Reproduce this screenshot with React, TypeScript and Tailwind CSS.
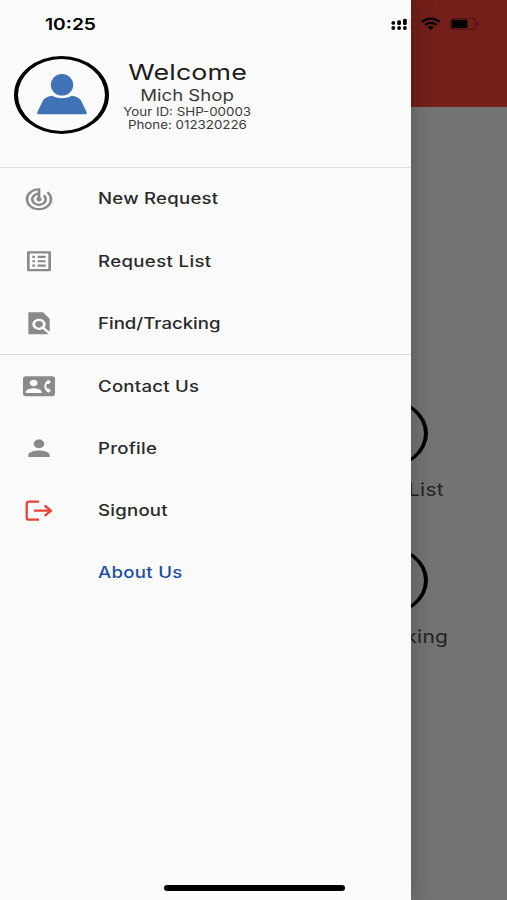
import type { ReactNode } from "react";
import { MdContactPhone, MdListAlt, MdPerson, MdTrackChanges } from "react-icons/md";

const iconClass = "w-8 h-[26.5px] text-[#8a8a8a]";

const FindIcon = () => (
  <svg viewBox="0 0 24 24" preserveAspectRatio="none" fill="currentColor" className={iconClass}>
    <path d="M20 19.590V8l-5-6H4v20h15.200l-4.440-4.830c-.8.52-1.740.83-2.760.83-2.760 0-5-2.240-5-5s2.240-5 5-5 5 2.240 5 5c0 1.020-.31 1.960-.83 2.750L20 19.590zM9 13c0 1.660 1.340 3 3 3s3-1.340 3-3-1.340-3-3-3-3 1.340-3 3z" />
  </svg>
);

const LogoutIcon = () => (
  <svg viewBox="0 0 28 22" className="w-7 h-[22px] -translate-x-[0.5px] -translate-y-[0.5px]" fill="none" stroke="#f04036" strokeWidth="2.3">
    <path d="M14.500 2.200H4.200a2 2 0 0 0-2 2v14a2 2 0 0 0 2 2h10.300" />
    <path d="M9.500 11.200h17M20.200 6l6.200 5.200-6.200 5.200" />
  </svg>
);

type MenuItemProps = {
  icon?: ReactNode;
  label: string;
  className?: string;
};

const MenuItem = ({ icon, label, className = "tracking-[0.2px] text-[#2a2a2a]" }: MenuItemProps) => (
  <li className="flex h-[62.100px] items-center">
    <span className="flex w-[77px] justify-center">{icon}</span>
    <span className={`ml-[21px] origin-left scale-x-[1.2] whitespace-nowrap text-[15.5px] font-medium ${className}`}>
      {label}
    </span>
  </li>
);

const Tile = ({ label, className }: { label: string; className: string }) => (
  <div className="flex h-[146.500px] flex-col items-end pr-[59px]">
    <div className="mr-[20px] h-[71px] w-[88px] rounded-[50%] border-x-4 border-y-[3.5px] border-black" />
    <span className={`mt-[7px] origin-right scale-x-[1.2] whitespace-nowrap text-[17.5px] leading-7 tracking-[0.2px] text-[#222] ${className}`}>
      {label}
    </span>
  </div>
);

const StatusBar = () => (
  <div className="absolute inset-x-0 top-0 z-20 flex h-12 items-center pl-[45px] text-black">
    <span className="w-[346px]">
      <span className="inline-block origin-left scale-x-[1.2] text-[16px] font-semibold leading-6">10:25</span>
    </span>
    <svg width="90" height="16" viewBox="0 0 90 16">
      {/* signal */}
      <g>
        <circle cx="2.300" cy="6.900" r="1.900" />
        <rect x="6.200" y="4.200" width="3.800" height="4.800" rx="1.500" />
        <rect x="12" y="2.800" width="3.800" height="6.200" rx="1.500" />
        <circle cx="2.300" cy="12" r="1.900" />
        <circle cx="8.100" cy="12" r="1.900" />
        <circle cx="13.900" cy="12" r="1.900" />
      </g>
      <rect x="17.800" y="1.500" width="1.600" height="12.500" fill="#e3e3e3" />
      {/* wifi */}
      <g fill="none" stroke="#000" strokeWidth="2.300">
        <path d="M31 5.800q8.800-6.200 17.600 0" />
        <path d="M34 9q5.800-4.200 11.600 0" />
      </g>
      <path d="M36.600 11.200q3.200-2.400 6.400 0l-3.200 2.600z" />
      {/* battery */}
      <rect x="59.300" y="2.500" width="25.500" height="10.800" rx="2.500" fill="none" stroke="#4a120e" />
      <rect x="60.500" y="3.700" width="16" height="8.200" rx="1" />
      <path d="M86.500 5.800q3 2 0 4z" fill="#4a120e" />
    </svg>
  </div>
);

const App = () => {
  return (
    <div className="relative h-[900px] w-[507px] overflow-hidden bg-[#737373] font-['Inter','Liberation_Sans',sans-serif]">
      {/* Home screen behind the drawer */}
      <div className="h-[107px] bg-[#741f19]" />
      <div className="flex flex-col pt-[291px]">
        <Tile label="Request List" className="mr-[4px]" />
        <Tile label="Find/Tracking" className="mr-0" />
      </div>

      {/* Drawer */}
      <aside className="absolute inset-y-0 left-0 z-10 w-[411px] bg-[#fbfbfb] shadow-[0_0_20px_1px_rgba(0,0,0,0.25)]">
        <header className="flex h-[168px] border-b border-[#dedede] pl-[14px] pt-[56px]">
          <div className="flex h-[78px] w-[95px] shrink-0 items-center justify-center rounded-[50%] border-x-4 border-y-[3.5px] border-black">
            <svg width="50" height="42" viewBox="0 0 50 42" fill="#4072b8">
              <ellipse cx="25" cy="10.800" rx="11.200" ry="10.800" />
              <path d="M15 21.800c5.500 3.300 14.500 3.300 20 0 5 .7 8.200 2.500 9.400 5.500l5.300 11c.4 1.500-.3 2-1.700 2H2c-1.400 0-2.100-.5-1.700-2l5.300-11c1.200-3 4.400-4.800 9.400-5.500z" />
            </svg>
          </div>
          <div className="flex w-[157px] flex-col items-center whitespace-nowrap text-[#3a3a3a]">
            <span className="mt-[2px] scale-x-[1.22] text-[22px] leading-7 tracking-[0.1px] text-[#1c1c1c]">Welcome</span>
            <span className="mt-px scale-x-[1.2] text-[15.500px] leading-[18px]">Mich Shop</span>
            <span className="mt-px scale-x-[1.18] text-[11.300px] leading-[13px]">Your ID: SHP-00003</span>
            <span className="scale-x-[1.18] text-[11.300px] leading-[13px]">Phone: 012320226</span>
          </div>
        </header>

        <ul className="border-b border-[#dedede]">
          <MenuItem icon={<MdTrackChanges preserveAspectRatio="none" className={iconClass} />} label="New Request" />
          <MenuItem icon={<MdListAlt preserveAspectRatio="none" className={iconClass} />} label="Request List" className="tracking-[0.3px] text-[#2a2a2a]" />
          <MenuItem icon={<FindIcon />} label="Find/Tracking" className="text-[#2a2a2a]" />
        </ul>
        <ul>
          <MenuItem icon={<MdContactPhone preserveAspectRatio="none" className={iconClass} />} label="Contact Us" />
          <MenuItem icon={<MdPerson preserveAspectRatio="none" className={iconClass} />} label="Profile" />
          <MenuItem icon={<LogoutIcon />} label="Signout" />
          <MenuItem label="About Us" className="tracking-[0.25px] text-[#1b4fa3]" />
        </ul>
      </aside>

      <StatusBar />
      {/* Home indicator */}
      <div className="absolute bottom-[9px] left-[164px] z-20 h-[6px] w-[181px] rounded-full bg-black" />
    </div>
  );
};

export default App;
